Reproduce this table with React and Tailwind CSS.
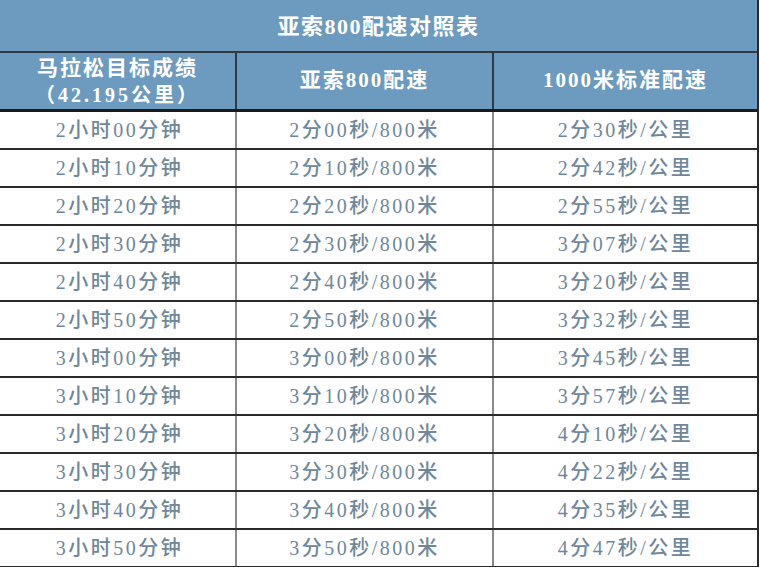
import React from "react";

const rows = [
  ["2小时00分钟", "2分00秒/800米", "2分30秒/公里"],
  ["2小时10分钟", "2分10秒/800米", "2分42秒/公里"],
  ["2小时20分钟", "2分20秒/800米", "2分55秒/公里"],
  ["2小时30分钟", "2分30秒/800米", "3分07秒/公里"],
  ["2小时40分钟", "2分40秒/800米", "3分20秒/公里"],
  ["2小时50分钟", "2分50秒/800米", "3分32秒/公里"],
  ["3小时00分钟", "3分00秒/800米", "3分45秒/公里"],
  ["3小时10分钟", "3分10秒/800米", "3分57秒/公里"],
  ["3小时20分钟", "3分20秒/800米", "4分10秒/公里"],
  ["3小时30分钟", "3分30秒/800米", "4分22秒/公里"],
  ["3小时40分钟", "3分40秒/800米", "4分35秒/公里"],
  ["3小时50分钟", "3分50秒/800米", "4分47秒/公里"],
];

const font = { fontFamily: '"Liberation Serif", "Noto Sans CJK SC", serif' };

export default function App() {
  return (
    <div className="w-[760px] h-[567px] overflow-hidden bg-white" style={font}>
      <div className="w-[759px] border-r-2 border-[#2a2a2a]">
        <div className="h-[53px] bg-[#6d9bbf] border-b-2 border-[#2e3a44] flex items-center justify-center text-white text-[22px] font-bold tracking-[1.5px] pt-[2px]">
          亚索800配速对照表
        </div>
        <div className="grid grid-cols-[237px_257px_1fr] h-[59px] bg-[#6d9bbf] border-b-[3px] border-[#1a1a1a] text-white font-semibold text-[21px] tracking-[2px]">
          <div className="border-r-2 border-[#2e3a44] flex flex-col items-center justify-center leading-[27px] pt-[2px]">
            <span>马拉松目标成绩</span>
            <span className="text-[20px] tracking-[3px]">（42.195公里）</span>
          </div>
          <div className="border-r-2 border-[#2e3a44] flex items-center justify-center">亚索800配速</div>
          <div className="flex items-center justify-center">1000米标准配速</div>
        </div>
        {rows.map((r, i) => (
          <div
            key={i}
            className="grid grid-cols-[237px_257px_1fr] h-[38px] border-b-2 border-[#2a2a2a] text-[#6f8799] text-[20px] tracking-[2.5px] font-medium"
          >
            <div className="border-r-2 border-[#8a8a8a] flex items-center justify-center pl-[4px]">{r[0]}</div>
            <div className="border-r-2 border-[#8a8a8a] flex items-center justify-center">{r[1]}</div>
            <div className="flex items-center justify-center">{r[2]}</div>
          </div>
        ))}
      </div>
    </div>
  );
}
